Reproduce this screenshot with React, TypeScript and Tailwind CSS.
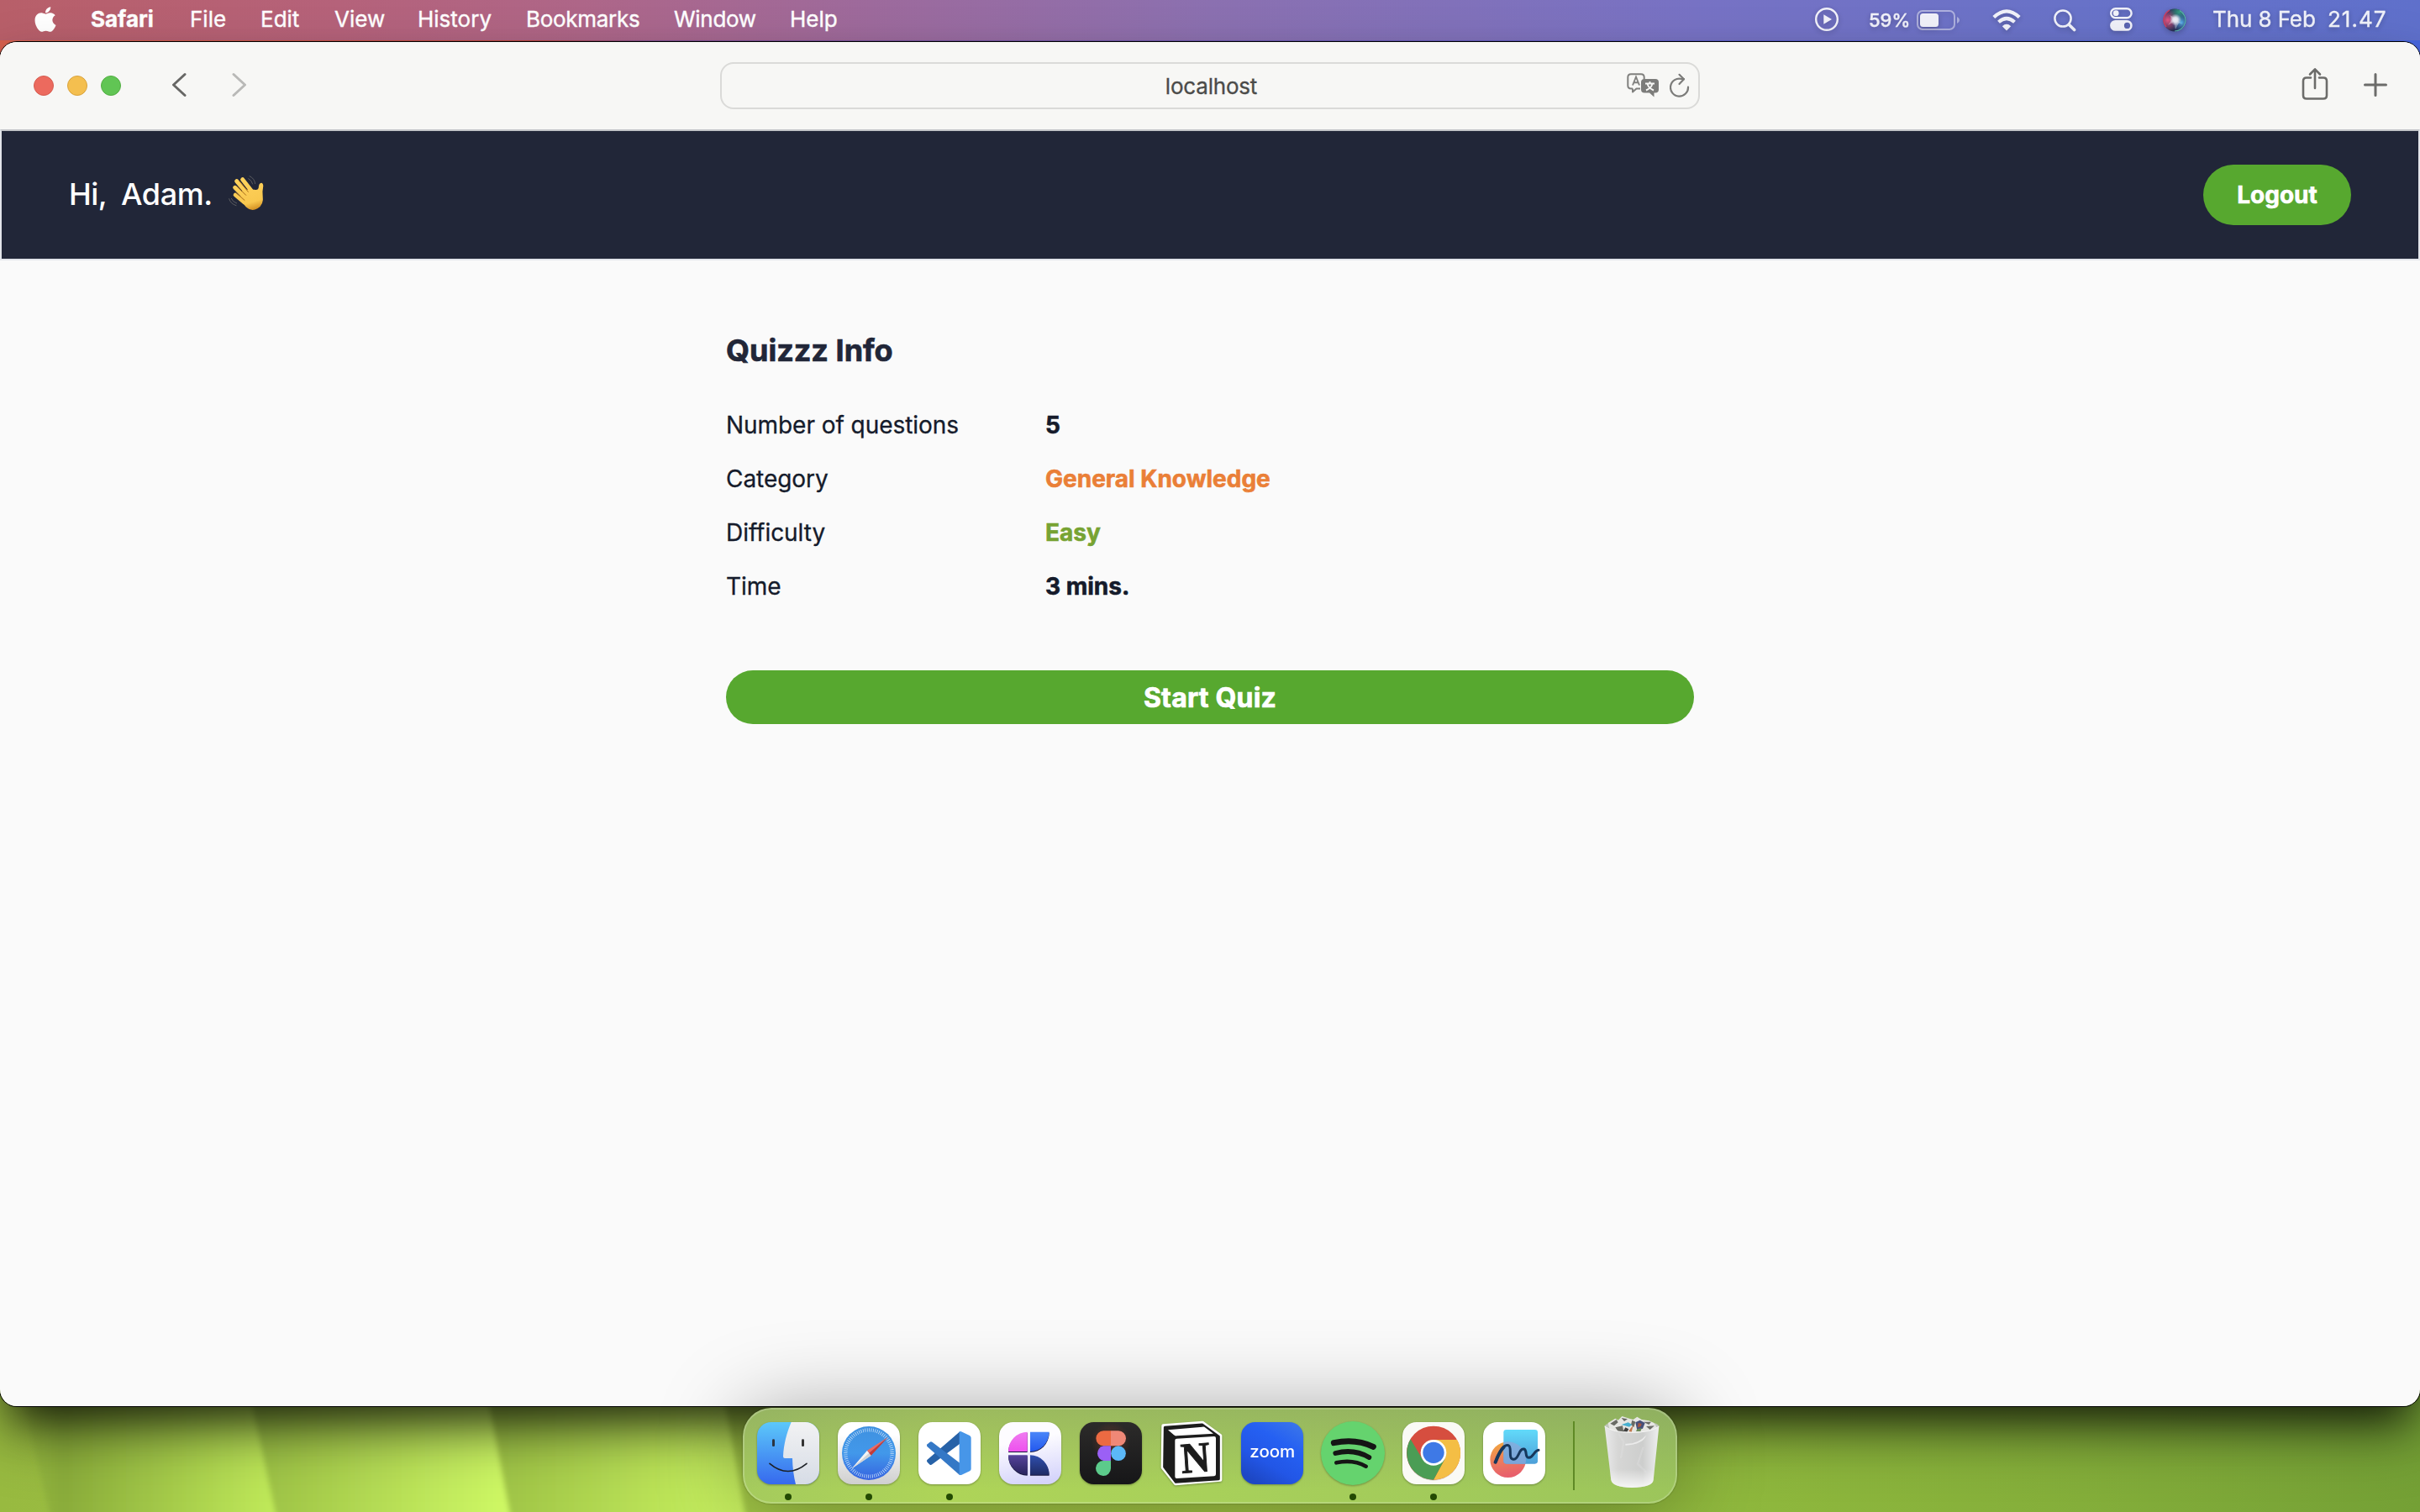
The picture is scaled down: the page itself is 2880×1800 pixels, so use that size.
import React from "react";
import { FaApple } from "react-icons/fa";

function Wallpaper() {
  return (
    <svg className="absolute inset-0" width="2880" height="1800" viewBox="0 0 2880 1800">
      <defs>
        <linearGradient id="sky" x1="0" x2="1" y1="0" y2="0">
          <stop offset="0" stopColor="#d6614e" />
          <stop offset="0.22" stopColor="#b8433a" />
          <stop offset="0.27" stopColor="#7d4d8e" />
          <stop offset="0.7" stopColor="#5a5cc4" />
          <stop offset="1" stopColor="#4766dd" />
        </linearGradient>
        <linearGradient id="grass" x1="0" x2="1" y1="0" y2="0">
          <stop offset="0" stopColor="#98ba40" />
          <stop offset="0.3" stopColor="#a3c847" />
          <stop offset="0.5" stopColor="#a2c644" />
          <stop offset="0.72" stopColor="#8fb83d" />
          <stop offset="0.86" stopColor="#84ae3a" />
          <stop offset="1" stopColor="#74a035" />
        </linearGradient>
        <linearGradient id="blade1" x1="0" x2="1" y1="0" y2="0">
          <stop offset="0.02" stopColor="#98ba40" />
          <stop offset="0.2" stopColor="#8aac3a" />
          <stop offset="1" stopColor="#c2ec5b" />
        </linearGradient>
        <linearGradient id="blade2" x1="0" x2="1" y1="0" y2="0">
          <stop offset="0.1" stopColor="#9ec346" />
          <stop offset="1" stopColor="#d0fa66" />
        </linearGradient>
        <linearGradient id="blade3" x1="0" x2="1" y1="0" y2="0">
          <stop offset="0.1" stopColor="#a0c547" />
          <stop offset="0.95" stopColor="#c9f260" />
        </linearGradient>
        <filter id="soft"><feGaussianBlur stdDeviation="3" /></filter>
      </defs>
      <rect width="2880" height="900" fill="url(#sky)" />
      <rect y="900" width="2880" height="900" fill="url(#grass)" />
      <g filter="url(#soft)">
        <path d="M10 1600H300L336 1830H66Z" fill="url(#blade1)" />
        <path d="M284 1600H580L612 1830H334Z" fill="url(#blade2)" />
        <path d="M568 1600H850L892 1830H612Z" fill="url(#blade3)" />
      </g>
    </svg>
  );
}

const menus = [
  { label: "File", cls: "w-[84px]" },
  { label: "Edit", cls: "w-[88px]" },
  { label: "View", cls: "w-[99px]" },
  { label: "History", cls: "w-[129px]" },
  { label: "Bookmarks", cls: "w-[176px] tracking-[-0.3px]" },
  { label: "Window", cls: "w-[138px] tracking-[-0.3px]" },
  { label: "Help", cls: "w-[84px]" },
];

function MenuBar() {
  return (
    <header className="relative flex h-12 shrink-0 items-center bg-[linear-gradient(90deg,#b85f69_0%,#b5627a_14%,#ae6688_24%,#9d6a9c_36%,#8b70b0_50%,#7772c4_70%,#6872c8_86%,#5f70cb_100%)] pb-[2px] text-[26px] leading-[46px] text-white [-webkit-text-stroke:0.4px]">
      <FaApple className="ml-[39px] h-[34px] w-[30px]" />
      <nav className="ml-[39px] flex whitespace-nowrap">
        <span className="w-[118px] font-bold">Safari</span>
        {menus.map((m) => (
          <span key={m.label} className={m.cls}>{m.label}</span>
        ))}
      </nav>
      <div className="ml-auto flex h-[46px] items-center opacity-90 drop-shadow-[0_2px_3px_rgba(0,0,0,0.25)]">
        <svg width="28" height="28" viewBox="0 0 28 28" className="mr-[36px]">
          <circle cx="14" cy="14" r="12.8" fill="none" stroke="#fff" strokeWidth="2.4" />
          <path d="M10.3 8.2L20 14L10.3 19.8Z" fill="#fff" />
        </svg>
        <span className="w-[57px] pt-[2px] text-[22px] font-medium">59%</span>
        <svg width="52" height="24" viewBox="0 0 52 24" className="mt-[2px] mr-[38px]">
          <rect x="1" y="1" width="44" height="22" rx="6" fill="none" stroke="#fff" strokeOpacity="0.5" strokeWidth="2" />
          <rect x="4" y="4" width="22" height="16" rx="3.5" fill="#fff" />
          <path d="M48 8Q51 9.5 51 12Q51 14.500 48 16Z" fill="#fff" fillOpacity="0.5" />
        </svg>
        <svg width="34" height="26" viewBox="0 0 34 26" className="mr-[39px] mt-px">
          <g fill="none" stroke="#fff" strokeWidth="4.2">
            <path d="M1.800 9.600Q17 -4.800 32.200 9.600" />
            <path d="M7.500 15.200Q17 6.800 26.500 15.200" />
          </g>
          <path d="M17 25.500L11.800 20.200Q17 15.400 22.200 20.200Z" fill="#fff" />
        </svg>
        <svg width="27" height="27" viewBox="0 0 27 27" className="mr-[40px] mt-[2px]" fill="none" stroke="#fff" strokeLinecap="round">
          <circle cx="11" cy="11" r="9.600" strokeWidth="2.500" />
          <path d="M18.200 18.200L24.600 24.600" strokeWidth="3.600" />
        </svg>
        <svg width="27" height="28" viewBox="0 0 27 28" className="mr-[36px]">
          <rect x="1.200" y="1.200" width="24.400" height="11" rx="5.500" fill="none" stroke="#fff" strokeWidth="2.400" />
          <circle cx="7.200" cy="6.700" r="3.400" fill="#fff" />
          <path fillRule="evenodd" d="M6.500 15H20.300A6.400 6.400 0 0 1 20.300 27.800H6.500A6.400 6.400 0 0 1 6.500 15ZM20.500 17.800A3.600 3.600 0 1 0 20.500 25A3.600 3.600 0 1 0 20.500 17.800Z" fill="#fff" />
        </svg>
        <svg width="28" height="28" viewBox="0 0 28 28" className="mt-[2px] mr-[31px]">
          <defs>
            <radialGradient id="siriRed" cx="0.2" cy="0.5" r="0.5"><stop offset="0" stopColor="#f0527c" /><stop offset="1" stopColor="#f0527c" stopOpacity="0" /></radialGradient>
            <radialGradient id="siriGreen" cx="0.7" cy="0.15" r="0.45"><stop offset="0" stopColor="#2f9f78" /><stop offset="1" stopColor="#2f9f78" stopOpacity="0" /></radialGradient>
            <radialGradient id="siriBlue" cx="0.8" cy="0.6" r="0.45"><stop offset="0" stopColor="#56b6f0" /><stop offset="1" stopColor="#2c62a0" stopOpacity="0" /></radialGradient>
            <radialGradient id="siriGlow" cx="0.54" cy="0.48" r="0.26"><stop offset="0" stopColor="#fff" /><stop offset="0.4" stopColor="#fff" stopOpacity="0.9" /><stop offset="1" stopColor="#fff" stopOpacity="0" /></radialGradient>
          </defs>
          <circle cx="14" cy="14" r="13.500" fill="#22294a" />
          <circle cx="14" cy="14" r="13.500" fill="url(#siriRed)" />
          <circle cx="14" cy="14" r="13.500" fill="url(#siriGreen)" />
          <circle cx="14" cy="14" r="13.500" fill="url(#siriBlue)" />
          <path d="M15 13L24 19L19 17L15 25L13 16L6 20L11 13L8 8L14 11Z" fill="#fff" opacity="0.35" />
          <circle cx="14" cy="14" r="13.500" fill="url(#siriGlow)" />
          <path d="M8 2.200A13 13 0 0 0 4 22" fill="none" stroke="#d83a58" strokeWidth="1.500" />
          <path d="M20 2.500A13 13 0 0 1 14 27" fill="none" stroke="#58b8a8" strokeWidth="1.200" />
        </svg>
        <span className="w-[137px] whitespace-nowrap tracking-[-0.1px]">Thu 8 Feb</span>
        <span className="w-[110px] whitespace-nowrap tracking-[1px]">21.47</span>
      </div>
    </header>
  );
}

function Toolbar() {
  return (
    <div className="flex h-[104px] shrink-0 items-center bg-[#f7f7f5]">
      <div className="ml-10 flex gap-4">
        <span className="size-6 rounded-full border border-[#d65c50] bg-[#ec6a5e]" />
        <span className="size-6 rounded-full border border-[#d9a33d] bg-[#f4bf4f]" />
        <span className="size-6 rounded-full border border-[#52ae42] bg-[#61c554]" />
      </div>
      <div className="mb-[2px] ml-[60px] flex gap-[54px]">
        <svg width="18" height="30" viewBox="0 0 18 30" fill="none" stroke="#676765" strokeWidth="3" strokeLinecap="round" strokeLinejoin="round"><path d="M16 2.500L2.500 15L16 27.500" /></svg>
        <svg width="18" height="30" viewBox="0 0 18 30" fill="none" stroke="#b9b9b7" strokeWidth="3" strokeLinecap="round" strokeLinejoin="round"><path d="M2 2.500L15.500 15L2 27.500" /></svg>
      </div>
      <div className="ml-[563px] flex h-[56px] w-[1166px] items-center rounded-[16px] border-2 border-[#dadad8]">
        <span className="flex-1 pl-[88px] text-center text-[26px] tracking-[-0.2px] text-[#4b4b49] [-webkit-text-stroke:0.3px]">localhost</span>
        <svg width="40" height="30" viewBox="0 0 40 30" className="mr-[11px]">
          <path d="M7 18.500H5Q1.300 18.500 1.300 14.800V5Q1.300 1.300 5 1.300H17Q20.700 1.300 20.700 5V7.500M7 18.500V22.500L11.500 18.500H16" fill="none" stroke="#80807e" strokeWidth="2" strokeLinejoin="round" />
          <path d="M7 14.500L11 4.500L15 14.500M8.500 11.200H13.500" fill="none" stroke="#80807e" strokeWidth="1.900" />
          <path d="M21 7H34Q38 7 38 11V19.500Q38 23.500 34 23.500H32.500V28.500L27 23.500H21Q17 23.500 17 19.500V11Q17 7 21 7Z" fill="#7c7c7a" />
          <path d="M22 12.500H33M27.500 10V12.500M24.500 12.800Q26 18 32 20.500M30.500 12.800Q29 18 23 20.500" fill="none" stroke="#f7f7f5" strokeWidth="1.900" />
        </svg>
        <svg width="24" height="30" viewBox="0 0 24 30" className="mr-[10px]" fill="none" stroke="#7c7c7a" strokeWidth="2.200" strokeLinecap="round" strokeLinejoin="round">
          <path d="M22 16.500A10.500 10.500 0 1 1 14.500 7L17 7.200" />
          <path d="M11.500 1.800L17 7.200L11.500 13" />
        </svg>
      </div>
      <svg width="32" height="40" viewBox="0 0 32 40" className="mb-[4px] ml-[716px]" fill="none" stroke="#6c6c6a" strokeWidth="2.600" strokeLinecap="round" strokeLinejoin="round">
        <path d="M11 12.500H6Q2 12.500 2 16.500V33.500Q2 37.500 6 37.500H26Q30 37.500 30 33.500V16.500Q30 12.500 26 12.500H21" />
        <path d="M16 25V2.500M10 8.500L16 2.300L22 8.500" />
      </svg>
      <svg width="28" height="28" viewBox="0 0 28 28" className="mb-[2px] ml-[42px]" fill="none" stroke="#6c6c6a" strokeWidth="3" strokeLinecap="round">
        <path d="M14 1.500V26.500M1.500 14H26.500" />
      </svg>
    </div>
  );
}

function WavingHand() {
  return (
    <svg width="44" height="44" viewBox="0 0 132 132">
      <defs>
        <linearGradient id="skin" gradientUnits="userSpaceOnUse" x1="50" y1="10" x2="85" y2="126">
          <stop offset="0" stopColor="#ffd25c" />
          <stop offset="0.75" stopColor="#f9c84f" />
          <stop offset="1" stopColor="#d08c20" />
        </linearGradient>
      </defs>
      <g fill="none" stroke="url(#skin)" strokeLinecap="round">
        <path d="M29 20L68 66" strokeWidth="15" />
        <path d="M50 14L84 58" strokeWidth="15" />
        <path d="M23 43L60 80" strokeWidth="15" />
        <path d="M24 69L56 96" strokeWidth="14" />
      </g>
      <path d="M50 50L92 50Q104 54 107 45Q108 25 118 26Q126 29 123 44Q120 57 122 72Q127 104 103 118Q81 130 62 112L40 85Z" fill="url(#skin)" />
      <g fill="none" stroke="#a86c18" strokeWidth="3" strokeLinecap="round">
        <path d="M38 19L70 58M31 39L62 70M27 62L57 88" />
      </g>
      <g fill="none" stroke="#5b5c60" strokeWidth="3" strokeLinecap="round">
        <path d="M75 2Q93 10 95 29M71 11Q83 17 86 30M2 83Q7 101 27 107M10 82Q14 94 29 99" />
      </g>
    </svg>
  );
}

const info = [
  { label: "Number of questions", value: "5", cls: "text-[#151b2b]" },
  { label: "Category", value: "General Knowledge", cls: "text-[#ea7f37]" },
  { label: "Difficulty", value: "Easy", cls: "text-[#77a333]" },
  { label: "Time", value: "3 mins.", cls: "text-[#151b2b]" },
];

function BrowserWindow() {
  return (
    <section className="relative mt-[2px] flex h-[1624px] shrink-0 flex-col overflow-hidden rounded-[20px] bg-[#fafafa] text-[#151b2b]">
      <Toolbar />
      <div className="flex h-[156px] shrink-0 items-center justify-between border-2 border-[#e2e4ea] border-t-[#c2c4c8] bg-[#212638] pr-20 pl-20 text-white">
        <div className="flex items-center pb-[2px] text-[36px] font-medium">
          <span className="w-[62px] tracking-[-0.6px]">Hi,</span>
          <span className="w-[128px] tracking-[-0.4px]">Adam.</span>
          <WavingHand />
        </div>
        <button className="h-[72px] w-[176px] rounded-full bg-[#57a82f] text-[28px] font-bold [-webkit-text-stroke:0.6px]">Logout</button>
      </div>
      <main className="mx-auto flex w-[1152px] flex-col pt-[79px]">
        <h1 className="mb-[29px] h-[56px] text-[36px] leading-[56px] font-bold text-[#212638] [-webkit-text-stroke:0.7px]">Quizzz Info</h1>
        {info.map((r) => (
          <div key={r.label} className="flex h-16 items-center text-[28px]">
            <span className="w-[380px] tracking-[-0.05px] [-webkit-text-stroke:0.3px]">{r.label}</span>
            <span className={`font-bold [-webkit-text-stroke:0.6px] ${r.cls}`}>{r.value}</span>
          </div>
        ))}
        <button className="mt-[68px] h-16 rounded-full bg-[#57a82f] pt-px text-[32px] font-bold tracking-[0.2px] text-white [-webkit-text-stroke:0.7px]">Start Quiz</button>
      </main>
    </section>
  );
}

function Tile({ children }: { children: React.ReactNode }) {
  return (
    <svg width="74" height="74" viewBox="0 0 222 222" className="overflow-visible drop-shadow-[0_1px_1px_rgba(0,0,0,0.3)]">
      {children}
    </svg>
  );
}

function Finder() {
  return (
    <Tile>
      <defs>
        <linearGradient id="fBlue" x1="0" y1="0" x2="0" y2="1"><stop offset="0" stopColor="#5cc8fa" /><stop offset="1" stopColor="#3669ee" /></linearGradient>
        <linearGradient id="fWhite" x1="0" y1="0" x2="0" y2="1"><stop offset="0" stopColor="#f2f2f3" /><stop offset="1" stopColor="#d6dce6" /></linearGradient>
        <clipPath id="fClip"><rect width="222" height="222" rx="50" /></clipPath>
      </defs>
      <g clipPath="url(#fClip)">
        <rect width="222" height="222" fill="url(#fBlue)" />
        <path d="M122 0C105 40 95 80 93 122Q93 129 99 129H126Q127 180 138 222H222V0Z" fill="url(#fWhite)" />
      </g>
      <rect x="54" y="61" width="9" height="26" rx="4" fill="#2b3440" />
      <rect x="159" y="61" width="9" height="26" rx="4" fill="#333" />
      <path d="M45 148Q110 203 177 148" fill="none" stroke="#1c2026" strokeWidth="5" strokeLinecap="round" />
    </Tile>
  );
}

function Safari() {
  return (
    <Tile>
      <defs>
        <linearGradient id="sBg" x1="0" y1="0" x2="0" y2="1"><stop offset="0.2" stopColor="#fff" /><stop offset="1" stopColor="#cfcfcf" /></linearGradient>
        <linearGradient id="sBlue" x1="0" y1="0" x2="0" y2="1"><stop offset="0" stopColor="#3f91e0" /><stop offset="0.5" stopColor="#4298ea" /><stop offset="1" stopColor="#3563e0" /></linearGradient>
      </defs>
      <rect width="222" height="222" rx="50" fill="url(#sBg)" />
      <circle cx="111" cy="111" r="96" fill="url(#sBlue)" />
      <circle cx="111" cy="111" r="83" fill="none" stroke="#cfe4fa" strokeWidth="13" strokeDasharray="2.200 5.043" />
      <path d="M50 166L105 101L119 119Z" fill="#f4f4f4" />
      <path d="M50 166L112 110L119 119Z" fill="#d2d2d4" />
      <path d="M180 53L105 101L112 110Z" fill="#f06a60" />
      <path d="M180 53L119 119L112 110Z" fill="#c83a35" />
    </Tile>
  );
}

function VsCode() {
  return (
    <Tile>
      <rect width="222" height="222" rx="50" fill="#fff" />
      <path d="M148 34L31 135Q28 139 32 143L41 152Q45 154 49 151L148 77Z" fill="#2762a8" />
      <path d="M148 190L31 87Q28 83 32 79L41 71Q45 68 49 71L148 146Z" fill="#3478c6" />
      <path d="M146 34Q149 32 153 34L183 48Q188 51 188 56V167Q188 172 183 175L153 189Q149 190 146 188Z" fill="#4796e8" />
    </Tile>
  );
}

function Cee() {
  return (
    <Tile>
      <defs>
        <linearGradient id="cBg" x1="0.3" y1="0" x2="0.5" y2="1"><stop offset="0.3" stopColor="#fdfcff" /><stop offset="1" stopColor="#d5d4fb" /></linearGradient>
        <linearGradient id="cPink" x1="0" y1="0" x2="0" y2="1"><stop offset="0" stopColor="#f07cf0" /><stop offset="1" stopColor="#ee50ee" /></linearGradient>
        <linearGradient id="cBlue" x1="0" y1="0" x2="0" y2="1"><stop offset="0" stopColor="#4a86f8" /><stop offset="1" stopColor="#2358ee" /></linearGradient>
        <linearGradient id="cPurple" x1="0" y1="0" x2="0" y2="1"><stop offset="0" stopColor="#56439c" /><stop offset="1" stopColor="#28235c" /></linearGradient>
        <linearGradient id="cNavy" x1="0" y1="0" x2="0" y2="1"><stop offset="0" stopColor="#2f4fae" /><stop offset="1" stopColor="#1f2c66" /></linearGradient>
      </defs>
      <rect width="222" height="222" rx="50" fill="url(#cBg)" />
      <g fill="#17163c" transform="translate(0 3)">
        <path d="M33 105H101V35A68 70 0 0 0 33 105Z" />
        <path d="M111 35H179A68 70 0 0 1 111 105Z" />
        <path d="M33 118H101V188A68 70 0 0 1 33 118Z" />
        <path d="M111 188H179A68 70 0 0 0 111 118Z" />
      </g>
      <path d="M33 105H101V35A68 70 0 0 0 33 105Z" fill="url(#cPink)" />
      <path d="M111 35H179A68 70 0 0 1 111 105Z" fill="url(#cBlue)" />
      <path d="M33 118H101V188A68 70 0 0 1 33 118Z" fill="url(#cPurple)" />
      <path d="M111 188H179A68 70 0 0 0 111 118Z" fill="url(#cNavy)" />
    </Tile>
  );
}

function Figma() {
  return (
    <Tile>
      <defs>
        <linearGradient id="gBg" x1="0" y1="0" x2="0" y2="1"><stop offset="0" stopColor="#2c2b2a" /><stop offset="1" stopColor="#161618" /></linearGradient>
        <radialGradient id="gRed"><stop offset="0" stopColor="#e8552c" stopOpacity="0.3" /><stop offset="1" stopColor="#e8552c" stopOpacity="0" /></radialGradient>
      </defs>
      <rect width="222" height="222" rx="50" fill="url(#gBg)" />
      <circle cx="111" cy="70" r="70" fill="url(#gRed)" />
      <path d="M111 31H85A27 27 0 0 0 85 85H111Z" fill="#ec6a42" />
      <path d="M111 31H138A27 27 0 0 1 138 85H111Z" fill="#ef8877" />
      <path d="M111 85H85A27 27 0 0 0 85 138H111Z" fill="#9b60f5" />
      <circle cx="138" cy="111.500" r="26.500" fill="#5bb8f8" />
      <path d="M111 138H85A27 27 0 1 0 111 165Z" fill="#5ccb8b" />
    </Tile>
  );
}

function Notion() {
  return (
    <Tile>
      <path d="M10 13L150 2L214 48V206L54 220L8 162Z" fill="#fff" stroke="#fff" strokeWidth="12" strokeLinejoin="round" />
      <path d="M16 19L149 9L208 52V203L55 214L14 160Z" fill="#1c1c1c" stroke="#1c1c1c" strokeWidth="9" strokeLinejoin="round" />
      <path d="M27 28L150 17Q156 16 161 20L189 41L58 49Q52 50 48 46Z" fill="#fff" />
      <path d="M58 59L192 51Q198 51 198 57V186Q198 192 192 193L58 201Q52 201 52 195V65Q52 59 58 59Z" fill="#fff" />
      <text x="125" y="179" textAnchor="middle" fontSize="154" fontFamily="Liberation Serif, serif" fontWeight="700" fill="#1c1c1c" stroke="#1c1c1c" strokeWidth="3" transform="rotate(-4 125 130)" textLength="104" lengthAdjust="spacingAndGlyphs">N</text>
    </Tile>
  );
}

function Zoom() {
  return (
    <Tile>
      <defs><linearGradient id="zBg" x1="0.9" y1="0" x2="0.3" y2="1"><stop offset="0" stopColor="#3b76ea" /><stop offset="0.35" stopColor="#2560f2" /><stop offset="0.7" stopColor="#2256e6" /><stop offset="1" stopColor="#1d47c4" /></linearGradient></defs>
      <rect width="222" height="222" rx="50" fill="url(#zBg)" />
      <text transform="translate(31 127) scale(1.14 1)" fontSize="57" fontFamily="Inter, sans-serif" fontWeight="500" fill="#fff" textLength="142" lengthAdjust="spacingAndGlyphs">zoom</text>
    </Tile>
  );
}

function Spotify() {
  return (
    <Tile>
      <circle cx="111" cy="111" r="114" fill="#65d36e" />
      <g fill="none" stroke="#151515" strokeLinecap="round">
        <path d="M43 74Q120 57 184 88" strokeWidth="21" />
        <path d="M49 111Q115 94 169 126" strokeWidth="17.500" />
        <path d="M52 145Q112 132 158 158" strokeWidth="14" />
      </g>
    </Tile>
  );
}

function Chrome() {
  return (
    <Tile>
      <rect width="222" height="222" rx="50" fill="#fafaf5" />
      <circle cx="111" cy="114" r="95" fill="#000" opacity="0.12" />
      <circle cx="111" cy="110" r="96" fill="#d64e3f" />
      <path d="M111 63H195A96 96 0 0 1 111 206L151 132Z" fill="#f4be45" />
      <path d="M29 61A96 96 0 0 0 111 206L151 133L111 109L71 132Z" fill="#4b9d55" />
      <circle cx="111" cy="109" r="46" fill="#fff" />
      <circle cx="111" cy="109" r="38" fill="#3e79e6" />
    </Tile>
  );
}

function Freeform() {
  return (
    <Tile>
      <defs>
        <linearGradient id="ffO" x1="0" y1="0" x2="0.2" y2="1"><stop offset="0" stopColor="#f2ab3c" /><stop offset="0.6" stopColor="#ec7a5e" /><stop offset="1" stopColor="#e8606c" /></linearGradient>
        <linearGradient id="ffB" x1="0" y1="0" x2="0" y2="1"><stop offset="0" stopColor="#62dafa" /><stop offset="1" stopColor="#4d9fd8" /></linearGradient>
        <clipPath id="ffC"><rect x="73" y="27" width="122" height="122" rx="10" /></clipPath>
      </defs>
      <rect width="222" height="222" rx="50" fill="#fff" />
      <circle cx="89" cy="134" r="64" fill="url(#ffO)" />
      <rect x="73" y="27" width="122" height="122" rx="10" fill="url(#ffB)" />
      <circle cx="89" cy="134" r="64" fill="#8fa6d8" opacity="0.7" clipPath="url(#ffC)" />
      <path d="M44 143C58 105 74 80 90 83C106 88 86 134 110 133C128 131 128 92 146 96C160 101 146 127 164 127C180 125 182 102 198 100" fill="none" stroke="#16375c" strokeWidth="9" strokeLinecap="round" />
      <path d="M44 143C52 122 62 100 74 89" fill="none" stroke="#16375c" strokeWidth="12" strokeLinecap="round" />
    </Tile>
  );
}

function Trash() {
  return (
    <svg width="66" height="87" viewBox="0 0 198 261">
      <defs>
        <linearGradient id="tBody" x1="0" y1="0" x2="1" y2="0"><stop offset="0" stopColor="#e9e9ea" /><stop offset="0.25" stopColor="#d6d6d5" /><stop offset="0.7" stopColor="#cdcecd" /><stop offset="1" stopColor="#efeff0" /></linearGradient>
        <linearGradient id="tBase" x1="0" y1="0" x2="0" y2="1"><stop offset="0.7" stopColor="#fff" stopOpacity="0" /><stop offset="1" stopColor="#fff" stopOpacity="0.8" /></linearGradient>
      </defs>
      <ellipse cx="99" cy="36" rx="97" ry="20" fill="#c2c7bd" />
      <path d="M14 24L40 8L50 14L64 0L90 8L104 12L118 2L134 12L160 16L178 24L190 44L150 62H50L20 48Z" fill="#e6e6e3" />
      <path d="M22 26L44 12L50 22L36 34ZM62 6L84 10L72 18ZM40 40L66 34L70 56L50 54ZM140 20L168 20L160 30ZM150 36L180 34L164 48ZM100 14L112 20L106 40L96 30Z" fill="#6a6b65" />
      <path d="M62 30L86 22L100 30L90 38Z" fill="#48b0d0" />
      <path d="M94 44L104 32L98 56L88 54Z" fill="#c0764c" />
      <path d="M112 22L128 14L146 24L138 44L118 50Z" fill="#46507a" />
      <path d="M122 24L134 27L131 36L120 40Z" fill="#a85640" />
      <path d="M118 46L134 42L130 54H114Z" fill="#6a8a58" />
      <path d="M76 40L88 46L82 56L68 54Z" fill="#404040" />
      <path d="M2 36Q30 58 99 58Q168 58 196 36L176 228Q173 254 99 255Q30 254 25 228Z" fill="url(#tBody)" />
      <path d="M2 36Q30 58 99 58Q168 58 196 36L176 228Q173 254 99 255Q30 254 25 228Z" fill="url(#tBase)" />
      <path d="M76 98Q120 100 150 68Q140 100 76 104Z" fill="#f6f6f6" opacity="0.7" />
      <path d="M52 62L70 92L60 150M140 110L120 170L150 200" stroke="#e4e4e4" strokeWidth="7" fill="none" opacity="0.3" />
      <path d="M2 36Q30 58 99 58Q168 58 196 36" fill="none" stroke="#f6f6f6" strokeWidth="3" />
    </svg>
  );
}

const apps = [
  { name: "finder", Icon: Finder, open: true },
  { name: "safari", Icon: Safari, open: true },
  { name: "vscode", Icon: VsCode, open: true },
  { name: "craft", Icon: Cee, open: false },
  { name: "figma", Icon: Figma, open: false },
  { name: "notion", Icon: Notion, open: false },
  { name: "zoom", Icon: Zoom, open: false },
  { name: "spotify", Icon: Spotify, open: true },
  { name: "chrome", Icon: Chrome, open: true },
  { name: "freeform", Icon: Freeform, open: false },
];

function Dock() {
  return (
    <footer className="relative mx-auto mt-[2px] flex h-[114px] w-[1112px] shrink-0 rounded-[34px] bg-[linear-gradient(180deg,rgba(110,120,110,0.28),rgba(110,120,110,0)_85%),linear-gradient(90deg,#a5cb5d_0%,#aed458_22%,#a8d05a_50%,#9cc55b_100%)] pt-[17px] pl-[17px] shadow-[inset_0_0_0_2px_rgba(255,255,255,0.2),0_0_2px_rgba(0,0,0,0.4),0_6px_100px_rgba(0,0,0,0.36)]">
      <div className="flex gap-[22px]">
        {apps.map(({ name, Icon, open }) => (
          <div key={name} className="flex w-[74px] flex-col items-center gap-[11px]">
            <Icon />
            {open && <span className="size-2 rounded-full bg-[#234a03]" />}
          </div>
        ))}
      </div>
      <span className="-mt-px ml-[33px] h-[82px] w-[2px] bg-[#5f8a26]" />
      <div className="-mt-[7px] ml-[35px]"><Trash /></div>
    </footer>
  );
}

export default function App() {
  return (
    <div className="relative flex h-[1800px] w-[2880px] flex-col overflow-hidden font-[Inter,sans-serif]">
      <Wallpaper />
      <MenuBar />
      <div className="relative flex flex-col">
        <div className="absolute inset-x-0 top-[2px] h-[1624px] rounded-[20px] shadow-[0_0_0_1px_#000,0_36px_70px_0px_rgba(0,0,0,0.35),0_28px_50px_-16px_rgba(0,0,0,0.75)]" />
        <BrowserWindow />
        <Dock />
      </div>
    </div>
  );
}
